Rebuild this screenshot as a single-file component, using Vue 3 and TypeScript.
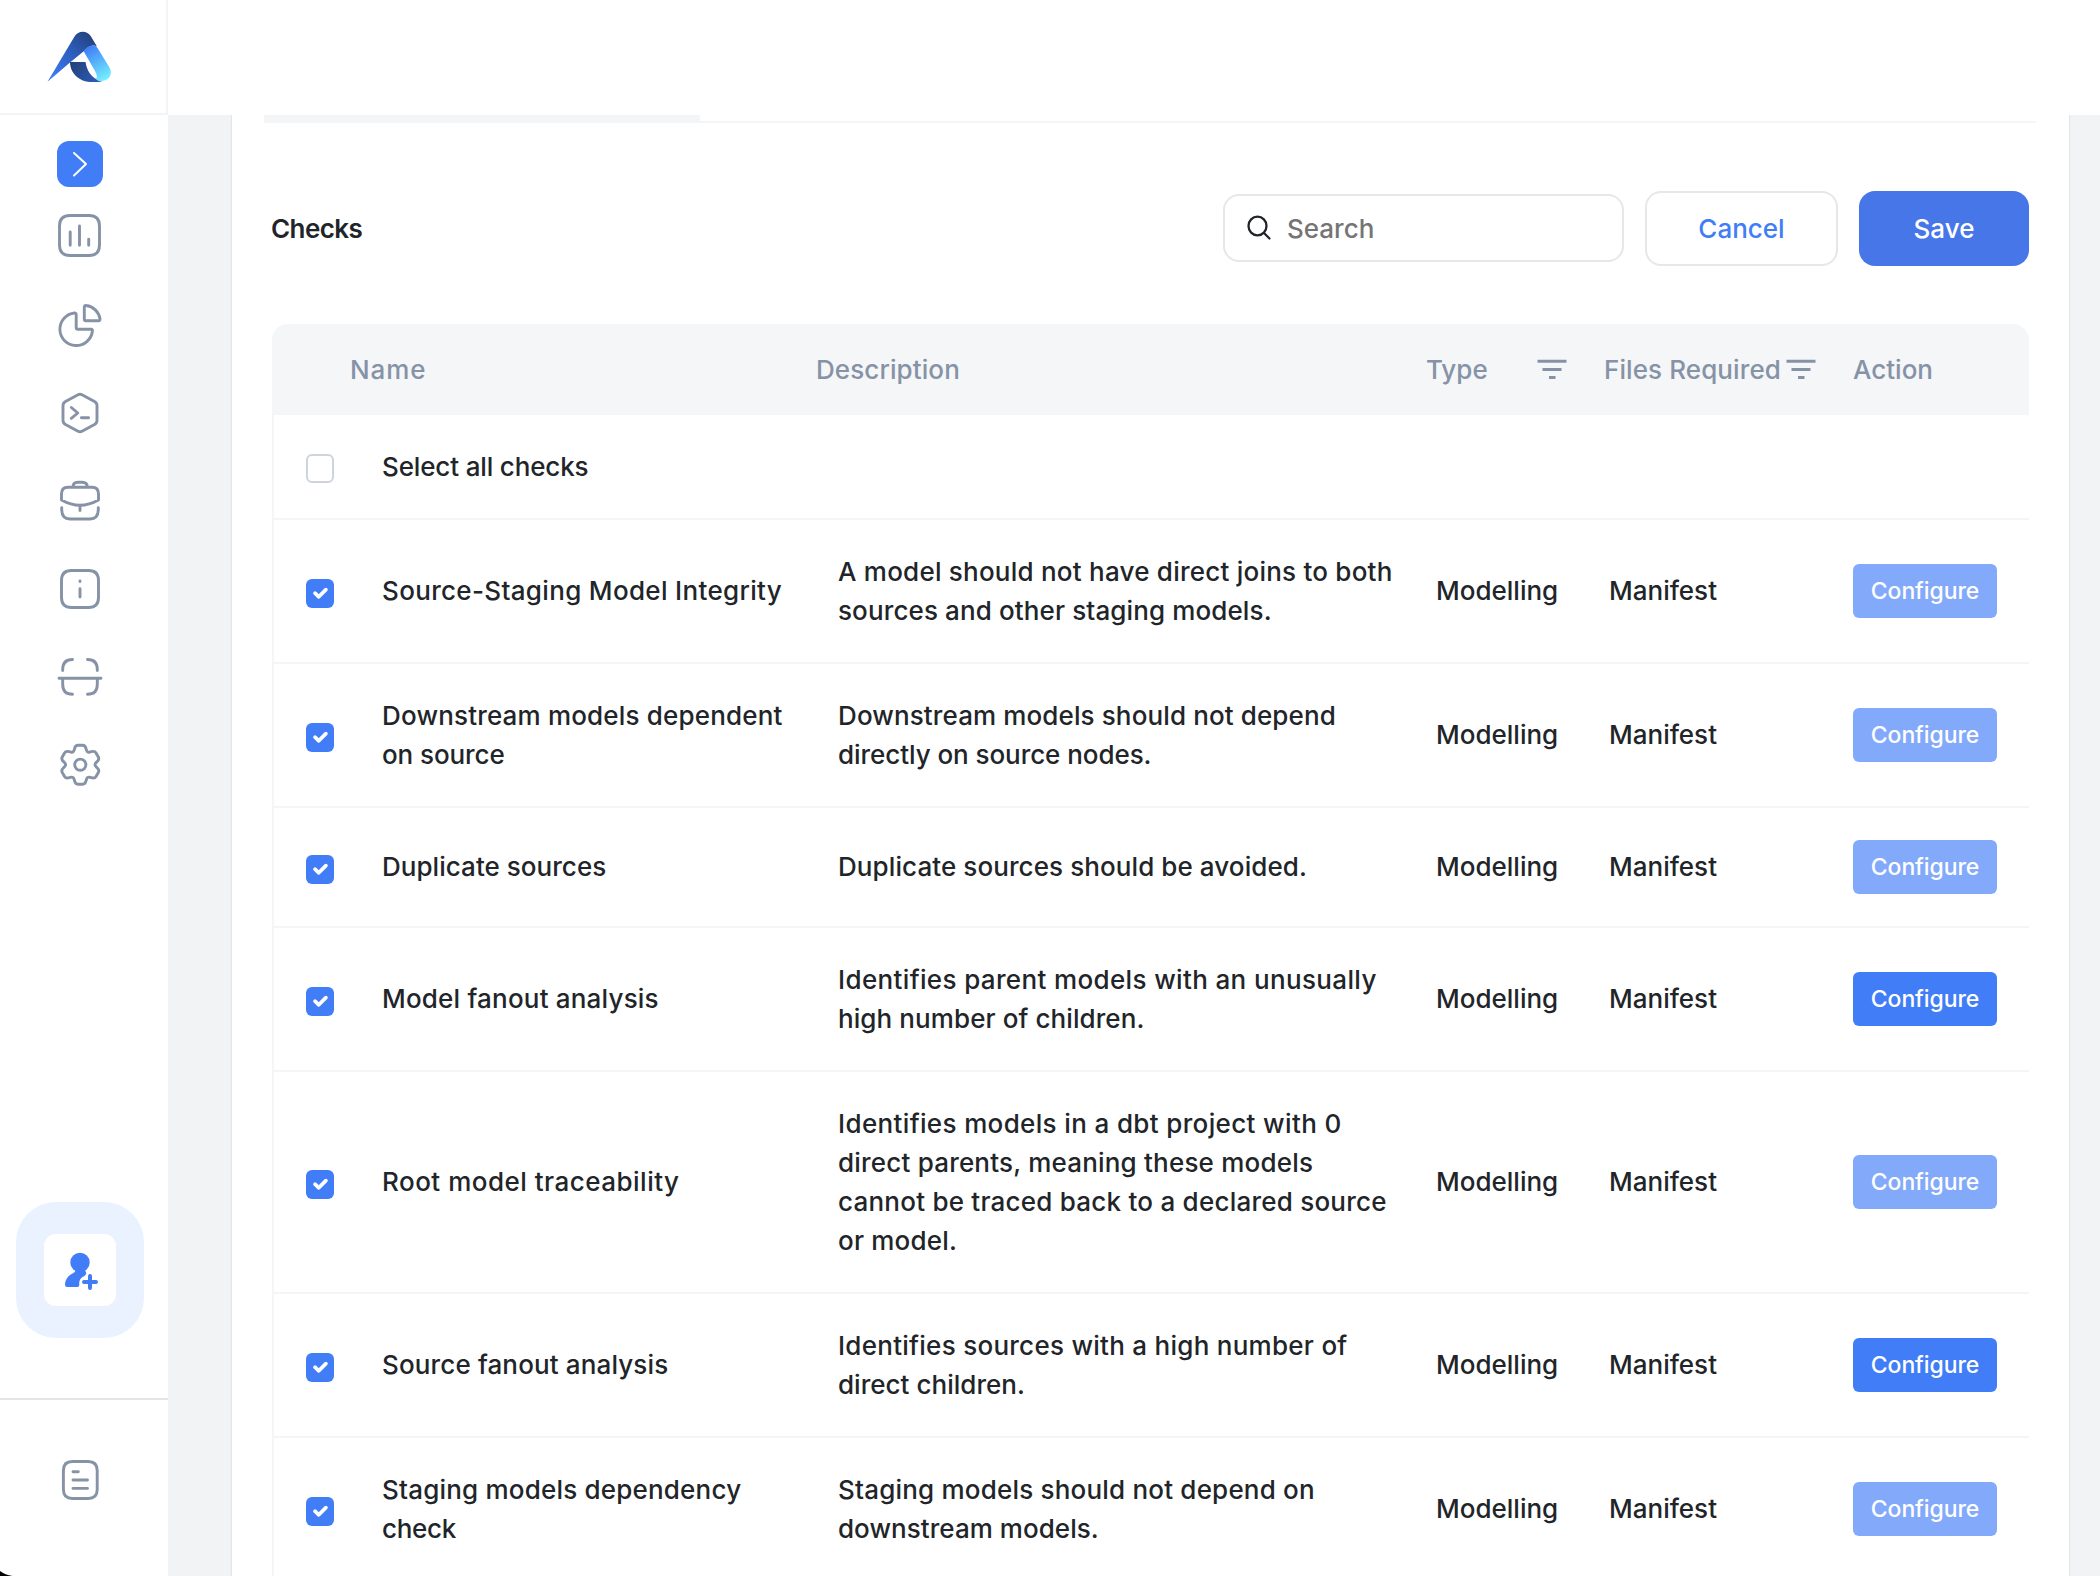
<script setup lang="ts">
interface Line {
  text: string
  tracking: number
}

interface Check {
  name: Line[]
  description: Line[]
  type: string
  files: string
  configurable: boolean
}

const line = (text: string, tracking = 0.2): Line => ({ text, tracking })

const checks: Check[] = [
  {
    name: [line('Source-Staging Model Integrity', 0.33)],
    description: [line('A model should not have direct joins to both', 0.23), line('sources and other staging models.', 0.12)],
    type: 'Modelling',
    files: 'Manifest',
    configurable: false,
  },
  {
    name: [line('Downstream models dependent', 0.18), line('on source', -0.1)],
    description: [line('Downstream models should not depend', 0.12), line('directly on source nodes.', -0.06)],
    type: 'Modelling',
    files: 'Manifest',
    configurable: false,
  },
  {
    name: [line('Duplicate sources', 0.04)],
    description: [line('Duplicate sources should be avoided.', 0.09)],
    type: 'Modelling',
    files: 'Manifest',
    configurable: false,
  },
  {
    name: [line('Model fanout analysis')],
    description: [line('Identifies parent models with an unusually', 0.36), line('high number of children.', 0.09)],
    type: 'Modelling',
    files: 'Manifest',
    configurable: true,
  },
  {
    name: [line('Root model traceability', 0.49)],
    description: [
      line('Identifies models in a dbt project with 0', 0.36),
      line('direct parents, meaning these models'),
      line('cannot be traced back to a declared source', 0.23),
      line('or model.'),
    ],
    type: 'Modelling',
    files: 'Manifest',
    configurable: false,
  },
  {
    name: [line('Source fanout analysis', 0.14)],
    description: [line('Identifies sources with a high number of', 0.27), line('direct children.', 0.03)],
    type: 'Modelling',
    files: 'Manifest',
    configurable: true,
  },
  {
    name: [line('Staging models dependency'), line('check', -0.3)],
    description: [line('Staging models should not depend on'), line('downstream models.', 0.05)],
    type: 'Modelling',
    files: 'Manifest',
    configurable: false,
  },
]

// Six-toothed gear outline: one tooth profile rotated around the centre.
function gearPath(cx: number, cy: number): string {
  const parts: string[] = []
  for (let k = 0; k < 6; k++) {
    const a = (k * Math.PI) / 3
    const p = (x: number, y: number) =>
      `${(cx + x * Math.cos(a) - y * Math.sin(a)).toFixed(2)} ${(cy + x * Math.sin(a) + y * Math.cos(a)).toFixed(2)}`
    parts.push(k === 0 ? `M${p(-6.2, -14.5)}` : `${p(-6.2, -14.5)}`)
    parts.push(`C${p(-5.4, -16)} ${p(-6, -19.5)} ${p(-2.3, -19.5)}`)
    parts.push(`L${p(2.3, -19.5)}`)
    parts.push(`C${p(6, -19.5)} ${p(5.4, -16)} ${p(6.2, -14.5)}`)
    parts.push(`Q${p(6.9, -11.9)}`)
  }
  parts.push(`${(cx - 6.2).toFixed(2)} ${(cy - 14.5).toFixed(2)}Z`)
  return parts.join(' ')
}

const icons: string[] = [
  'M20 22.5H39Q49.5 22.5 49.5 33V52Q49.5 62.5 39 62.5H20Q9.5 62.5 9.5 52V33Q9.5 22.5 20 22.5ZM20.2 39V52.3M29.5 33V52.3M38.7 46.3V52.3',
  'M24.5 32Q26.2 31.8 26.2 33.5V46.5Q26.2 48.3 28 48.3H41Q42.7 48.3 42.4 50A16.3 16.3 0 1 1 24.5 32ZM34.3 26.2Q34.3 24.2 36.2 24.5A16 16 0 0 1 50 37.8Q50.3 39.8 48.3 39.8H36Q34.3 39.8 34.3 38Z',
  'M28 25.8Q30 24.7 32 25.8L44.5 32.5Q47 34 47 36.5V51.5Q47 54 44.5 55.5L32 62.2Q30 63.3 28 62.2L15.5 55.5Q13 54 13 51.5V36.5Q13 34 15.5 32.5ZM21.3 38.5L27.8 44L21.3 49.3M31.4 48.7H38.6',
  'M11.5 43V37Q11.5 30.3 18 30.3H42Q48.5 30.3 48.5 37V43Q39 48.3 30 48.3Q21 48.3 11.5 43ZM23 30Q23 25.3 28 25.3H32Q37.3 25.3 37.3 30M11.7 50.8V53Q12 62 20 62H40Q48 62 48.3 53V50.8M30 48.3V53.5',
  'M21.5 25.5H38.5Q48.5 25.5 48.5 35.5V52.5Q48.5 62.5 38.5 62.5H21.5Q11.5 62.5 11.5 52.5V35.5Q11.5 25.5 21.5 25.5ZM30 43.8V52M30 36V36.5',
  'M9 45.3H51M12.7 37.5V36.5Q12.7 26.5 22.5 26.5M37.5 26.5Q47.3 26.5 47.3 36.5V37.5M12.7 46V51.5Q12.7 61.3 22.5 61.3M37.5 61.3Q47.3 61.3 47.3 51.5V46',
  gearPath(30.3, 43.7) + 'M24.7 43.7A5.6 5.6 0 1 0 35.9 43.7A5.6 5.6 0 1 0 24.7 43.7Z',
]
</script>

<template>
  <div class="app">
    <aside class="sidebar">
      <div class="brand">
        <svg width="166" height="113" viewBox="0 0 166 113">
          <defs>
            <linearGradient id="ga" x1="52" y1="78" x2="92" y2="36" gradientUnits="userSpaceOnUse">
              <stop offset="0" stop-color="#3f7bf5" />
              <stop offset="0.6" stop-color="#2c5bb8" />
              <stop offset="1" stop-color="#24437f" />
            </linearGradient>
            <linearGradient id="gb" x1="88" y1="47" x2="107" y2="80" gradientUnits="userSpaceOnUse">
              <stop offset="0" stop-color="#3f7df8" />
              <stop offset="1" stop-color="#76f3ff" />
            </linearGradient>
            <linearGradient id="gc" x1="70" y1="62" x2="98" y2="82" gradientUnits="userSpaceOnUse">
              <stop offset="0" stop-color="#233f78" />
              <stop offset="1" stop-color="#2d5cb8" />
            </linearGradient>
          </defs>
          <path d="M47.5 81.7L74.5 36.5C78 30 87.5 30 91 36.5L97 46.5C92 44 88 46.5 84 51L70 62.5Z" fill="url(#ga)" />
          <path d="M70 62H85.5C87 71 91 76.5 97 79.5L102 81.5C94 82.6 85 82.4 80 79C73.5 75 70 69 70 62Z" fill="url(#gc)" />
          <path d="M83.5 51C88 45.5 94 43.5 97.5 48L109.5 67.5C114 76 107 82.5 98 80.8L96 79C98 76 96 73.5 95 71Z" fill="url(#gb)" />
        </svg>
      </div>
      <button class="expand" aria-label="Expand">
        <svg width="46" height="46" viewBox="0 0 46 46"><path d="M17 12L29 23L17 34.5" /></svg>
      </button>
      <nav class="nav">
        <svg v-for="(d, i) in icons" :key="i" width="60" height="88" viewBox="0 0 60 88"><path :d="d" /></svg>
      </nav>
      <div class="invite">
        <div class="invite-inner">
          <svg width="72" height="72" viewBox="0 0 72 72">
            <circle cx="36" cy="28.4" r="9.7" />
            <path d="M31.5 35Q31.8 38 29 39.3C25 41 21.3 45 21 50.5Q21 53 23.5 53H33.3Q35.5 53 35.3 50.5C34.7 46 37.5 43 40.5 42Q43.5 39.5 41.3 37L41 35Z" />
            <path class="plus" d="M40 48H52M46 42V54" />
          </svg>
        </div>
      </div>
      <div class="docs">
        <svg width="60" height="60" viewBox="0 0 60 60">
          <path d="M22.4 11.5H38.2Q47.2 11.5 47.2 20.5V39.5Q47.2 48.5 38.2 48.5H22.4Q13.4 48.5 13.4 39.5V20.5Q13.4 11.5 22.4 11.5ZM23 21.7H28.3M23 30H37.5M23 38.4H37.5" />
        </svg>
      </div>
      <svg class="corner" width="14" height="5" viewBox="0 0 14 5"><path d="M0 0Q5 4 12.5 5H0Z" fill="#000" /></svg>
    </aside>

    <div class="main">
      <header class="topbar"></header>
      <section class="card">
        <div class="tabs"><div class="tab"></div></div>
        <div class="toolbar">
          <h2>Checks</h2>
          <label class="search">
            <svg width="26" height="26" viewBox="0 0 26 26"><path d="M2.5 11A9 9.3 0 1 0 20.5 11A9 9.3 0 1 0 2.5 11ZM18 18L23.5 23.5" /></svg>
            <input type="text" placeholder="Search" />
          </label>
          <button class="btn cancel">Cancel</button>
          <button class="btn save">Save</button>
        </div>
        <div class="table">
          <div class="thead">
            <span class="h-name">Name</span>
            <span class="h-desc">Description</span>
            <span class="h-type">Type</span>
            <svg class="filter" width="30" height="24" viewBox="0 0 30 24"><path d="M0.5 3.2H29.5M5.5 11.5H24.5M12 19.5H18.5" /></svg>
            <span class="h-files">Files Required</span>
            <svg class="filter" width="30" height="24" viewBox="0 0 30 24"><path d="M0.5 3.2H29.5M5.5 11.5H24.5M12 19.5H18.5" /></svg>
            <span class="h-action">Action</span>
          </div>
          <div class="row">
            <span class="box"></span>
            <span class="name all">Select all checks</span>
          </div>
          <div v-for="c in checks" :key="c.name[0].text" class="row">
            <span class="box on">
              <svg width="28" height="28" viewBox="0 0 28 28"><path d="M9 14.2L12.8 17.8L19.9 10.6" /></svg>
            </span>
            <div class="name" :class="{ single: c.name.length === 1 }">
              <div v-for="l in c.name" :key="l.text" :style="{ letterSpacing: l.tracking + 'px' }">{{ l.text }}</div>
            </div>
            <div class="desc" :class="{ single: c.description.length === 1 }">
              <div v-for="l in c.description" :key="l.text" :style="{ letterSpacing: l.tracking + 'px' }">{{ l.text }}</div>
            </div>
            <div class="type single">{{ c.type }}</div>
            <div class="files single">{{ c.files }}</div>
            <button class="configure" :class="{ muted: !c.configurable }">Configure</button>
          </div>
        </div>
      </section>
    </div>
  </div>
</template>

<style>
body {
  margin: 0;
  background: #fff;
  overflow: hidden;
}
</style>

<style scoped>
* {
  box-sizing: border-box;
}
.app {
  display: flex;
  width: 2100px;
  height: 1576px;
  overflow: hidden;
  font-family: Inter, "Liberation Sans", sans-serif;
  font-size: 26px;
  font-weight: 450;
  line-height: 39px;
  color: #212529;
  background: #fff;
}
button,
input {
  font-family: inherit;
  font-weight: inherit;
  border: 0;
  padding: 0;
}
svg {
  display: block;
  flex: none;
}
.sidebar {
  position: relative;
  width: 168px;
  flex: none;
  display: flex;
  flex-direction: column;
}
.brand {
  height: 115px;
  border-right: 2px solid #f4f4f5;
  border-bottom: 2px solid #f4f4f5;
}
.expand {
  margin: 26px 0 0 57px;
  width: 46px;
  height: 46px;
  border-radius: 12px;
  background: #407df7;
}
.expand path {
  fill: none;
  stroke: #fff;
  stroke-width: 2;
  stroke-linecap: round;
  stroke-linejoin: round;
}
.nav {
  margin: 6px 0 0 50px;
  width: 60px;
}
.nav path,
.docs path {
  fill: none;
  stroke: #8692a6;
  stroke-width: 2.9;
  stroke-linecap: round;
  stroke-linejoin: round;
}
.invite {
  margin: 393px 0 0 16px;
  width: 128px;
  height: 136px;
  border-radius: 40px;
  background: #ebf2ff;
  display: flex;
  align-items: center;
  justify-content: center;
}
.invite-inner {
  width: 72px;
  height: 72px;
  border-radius: 12px;
  background: #fff;
  fill: #407df7;
}
.plus {
  stroke: #407df7;
  stroke-width: 4;
  stroke-linecap: round;
}
.docs {
  margin-top: 60px;
  border-top: 2px solid #e4e5e7;
  padding: 50px 0 0 50px;
}
.corner {
  position: absolute;
  left: 0;
  bottom: 0;
}
.main {
  flex: 1;
  display: flex;
  flex-direction: column;
  background: #f2f3f5;
}
.topbar {
  height: 115px;
  flex: none;
  background: #fff;
}
.card {
  flex: 1;
  margin: 0 31px 0 64px;
  padding: 0 33px 0 32px;
  background: #fff;
  box-shadow: 0 0 2px rgba(0, 0, 0, 0.18);
  clip-path: inset(0 -4px);
}
.tabs {
  height: 8px;
  border-bottom: 2px solid #f4f5f7;
}
.tab {
  width: 436px;
  height: 8px;
  background: #f4f5f7;
}
.toolbar {
  display: flex;
  align-items: center;
  height: 75px;
  margin: 68px 7px 0 8px;
}
h2 {
  margin: 0 auto 0 -1px;
  font-size: 26px;
  font-weight: 600;
  letter-spacing: -0.6px;
}
.search {
  display: flex;
  align-items: center;
  width: 401px;
  height: 68px;
  margin-bottom: 1px;
  padding-left: 21px;
  border: 2px solid #e6e7e8;
  border-radius: 16px;
}
.search path {
  fill: none;
  stroke: #212529;
  stroke-width: 2.3;
  stroke-linecap: round;
}
.search input {
  width: 300px;
  margin-left: 15px;
  font-size: 26px;
  background: none;
}
.search input::placeholder {
  color: #757575;
  opacity: 1;
}
.btn {
  height: 75px;
  margin-left: 21px;
  border-radius: 16px;
  font-size: 26px;
}
.cancel {
  width: 193px;
  border: 2px solid #e6e7e8;
  background: #fff;
  color: #407df7;
}
.save {
  width: 170px;
  background: #4776e9;
  color: #fff;
  font-weight: 500;
}
.table {
  margin: 58px 7px 0 8px;
  border-left: 2px solid #f4f5f7;
  border-radius: 16px 16px 0 0;
}
.thead {
  display: flex;
  align-items: center;
  height: 91px;
  margin-left: -2px;
  padding-left: 78px;
  background: #f4f6f8;
  border-radius: 16px 16px 0 0;
  color: #8692a6;
  white-space: nowrap;
}
.h-name {
  width: 466px;
  letter-spacing: 0.9px;
}
.h-desc {
  width: 610px;
  letter-spacing: 0.1px;
}
.h-type {
  width: 111px;
}
.h-files {
  width: 182px;
  margin-left: 37px;
  letter-spacing: 0.1px;
}
.h-action {
  margin-left: 37px;
}
.filter path {
  stroke: #8692a6;
  stroke-width: 3;
}
.row {
  display: flex;
  align-items: center;
  padding: 32px 0 32px 32px;
  border-bottom: 2px solid #f4f5f6;
  white-space: nowrap;
}
.box {
  position: relative;
  top: 2px;
  width: 28px;
  height: 29px;
  flex: none;
  border: 2px solid #ced4da;
  border-radius: 6px;
}
.box.on {
  border: 0;
  background: #407df7;
}
.box path {
  fill: none;
  stroke: #fff;
  stroke-width: 3.7;
  stroke-linecap: round;
  stroke-linejoin: round;
}
.name {
  width: 456px;
  margin-left: 48px;
}
.name.all {
  letter-spacing: -0.15px;
}
.single {
  margin-bottom: 1px;
}
.desc {
  width: 598px;
}
.type {
  width: 173px;
}
.files {
  width: 244px;
}
.configure {
  width: 144px;
  height: 54px;
  border-radius: 6px;
  background: #407df7;
  color: #fff;
  font-size: 23px;
  font-weight: 500;
  letter-spacing: -0.1px;
}
.configure.muted {
  background: #83a9fa;
}
</style>
